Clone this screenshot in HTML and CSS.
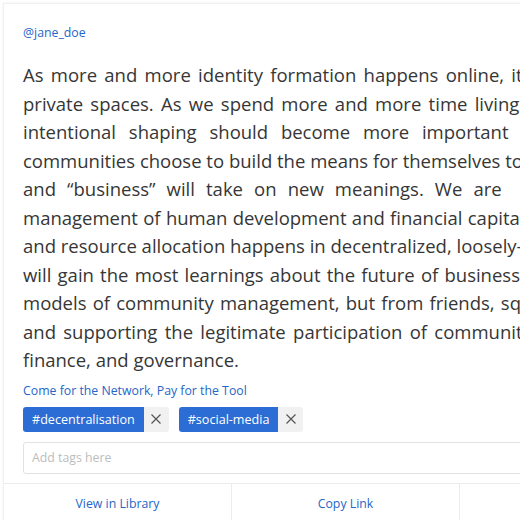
FILE: index.html
```html
<!DOCTYPE html>
<html lang="en">
<head>
<meta charset="utf-8">
<title>Bookmark</title>
<link rel="stylesheet" href="styles.css">
</head>
<body>
<div class="page">
  <article class="card">
    <div class="card-body">
      <a class="handle" href="#">@jane_doe</a>
      <p class="quote">
        <span class="ln ws-a">As more and more identity formation happens online, it</span>
        <span class="ln ws-a">private spaces. As we spend more and more time living</span>
        <span class="ln ws-d">intentional shaping should become more important</span>
        <span class="ln ws-n">communities choose to build the means for themselves to</span>
        <span class="ln ws-c">and “business” will take on new meanings. We are</span>
        <span class="ln ws-s">management of human development and financial capital</span>
        <span class="ln ws-n">and resource allocation happens in decentralized, loosely-</span>
        <span class="ln ws-m">will gain the most learnings about the future of business</span>
        <span class="ln ws-m">models of community management, but from friends, squads</span>
        <span class="ln ws-a">and supporting the legitimate participation of community</span>
        <span class="ln ws-n">finance, and governance.</span>
      </p>
      <a class="title" href="#">Come for the Network, Pay for the Tool</a>
      <div class="tags">
        <span class="tag"><span class="tag-name">#decentralisation</span><button class="tag-remove" type="button" aria-label="Remove">
          <svg viewBox="0 0 12 12" width="12" height="12"><path d="M1.5 1.5 10.5 10.5M10.5 1.5 1.5 10.5" stroke="currentColor" stroke-width="1.2" fill="none"/></svg></button></span>
        <span class="tag"><span class="tag-name">#social-media</span><button class="tag-remove" type="button" aria-label="Remove">
          <svg viewBox="0 0 12 12" width="12" height="12"><path d="M1.5 1.5 10.5 10.5M10.5 1.5 1.5 10.5" stroke="currentColor" stroke-width="1.2" fill="none"/></svg></button></span>
      </div>
      <input class="tag-input" type="text" placeholder="Add tags here">
    </div>
    <div class="card-footer">
      <a class="action" href="#">View in Library</a>
      <a class="action" href="#">Copy Link</a>
      <a class="action" href="#">Delete</a>
    </div>
  </article>
</div>
</body>
</html>
```
FILE: styles.css
```css
html, body {
  margin: 0;
  padding: 0;
  background: #ffffff;
  overflow: hidden;
}
body {
  font-family: "Open Sans", "Noto Sans", sans-serif;
  color: #333;
}
.page {
  padding: 3px 0 0 3px;
}
.card {
  width: 684px;
  background: #fff;
  border: 1px solid #f1f1f1;
  box-shadow: 0 0 3px rgba(0, 0, 0, 0.06);
}
.card-body {
  padding: 19px 19px 9px 19px;
  display: flex;
  flex-direction: column;
  align-items: flex-start;
}
.handle {
  font-size: 12.3px;
  line-height: 20px;
  color: #2566c8;
  text-decoration: none;
}
.quote {
  margin: 18px 0 0 0;
  font-size: 18.5px;
  line-height: 28.5px;
  color: #363636;
  width: 100%;
}
.ln {
  display: block;
  white-space: nowrap;
}
.ws-n { word-spacing: 0; }
.ws-s { word-spacing: 0.5px; }
.ws-m { word-spacing: 1.4px; }
.ws-a { word-spacing: 2.5px; }
.ws-c { word-spacing: 6.3px; }
.ws-d { word-spacing: 8px; }
.title {
  margin-top: 7px;
  font-size: 12.3px;
  line-height: 18px;
  color: #2566c8;
  text-decoration: none;
}
.tags {
  margin-top: 7px;
  display: flex;
  gap: 10px;
}
.tag {
  display: flex;
  height: 25px;
}
.tag-name {
  background: #2b6dd4;
  color: #fff;
  font-size: 12.6px;
  line-height: 25px;
  padding: 0 9px;
  border-radius: 3px 0 0 3px;
}
.tag-remove {
  width: 25px;
  height: 25px;
  padding: 0;
  border: 0;
  background: #f1f1f1;
  color: #555;
  border-radius: 0 3px 3px 0;
  display: flex;
  align-items: center;
  justify-content: center;
}
.tag-input {
  margin-top: 10px;
  box-sizing: border-box;
  width: 100%;
  height: 32px;
  border: 1px solid #e2e2e2;
  border-radius: 3px;
  padding: 0 8px;
  font-family: inherit;
  font-size: 12.3px;
  color: #333;
}
.tag-input::placeholder {
  color: #bdbdbd;
}
.card-footer {
  display: grid;
  grid-template-columns: repeat(3, 1fr);
  border-top: 1px solid #ececec;
}
.action {
  display: block;
  height: 40px;
  line-height: 39px;
  text-align: center;
  font-size: 12.3px;
  color: #2566c8;
  text-decoration: none;
  border-right: 1px solid #ececec;
}
.action:last-child {
  border-right: 0;
}
```
